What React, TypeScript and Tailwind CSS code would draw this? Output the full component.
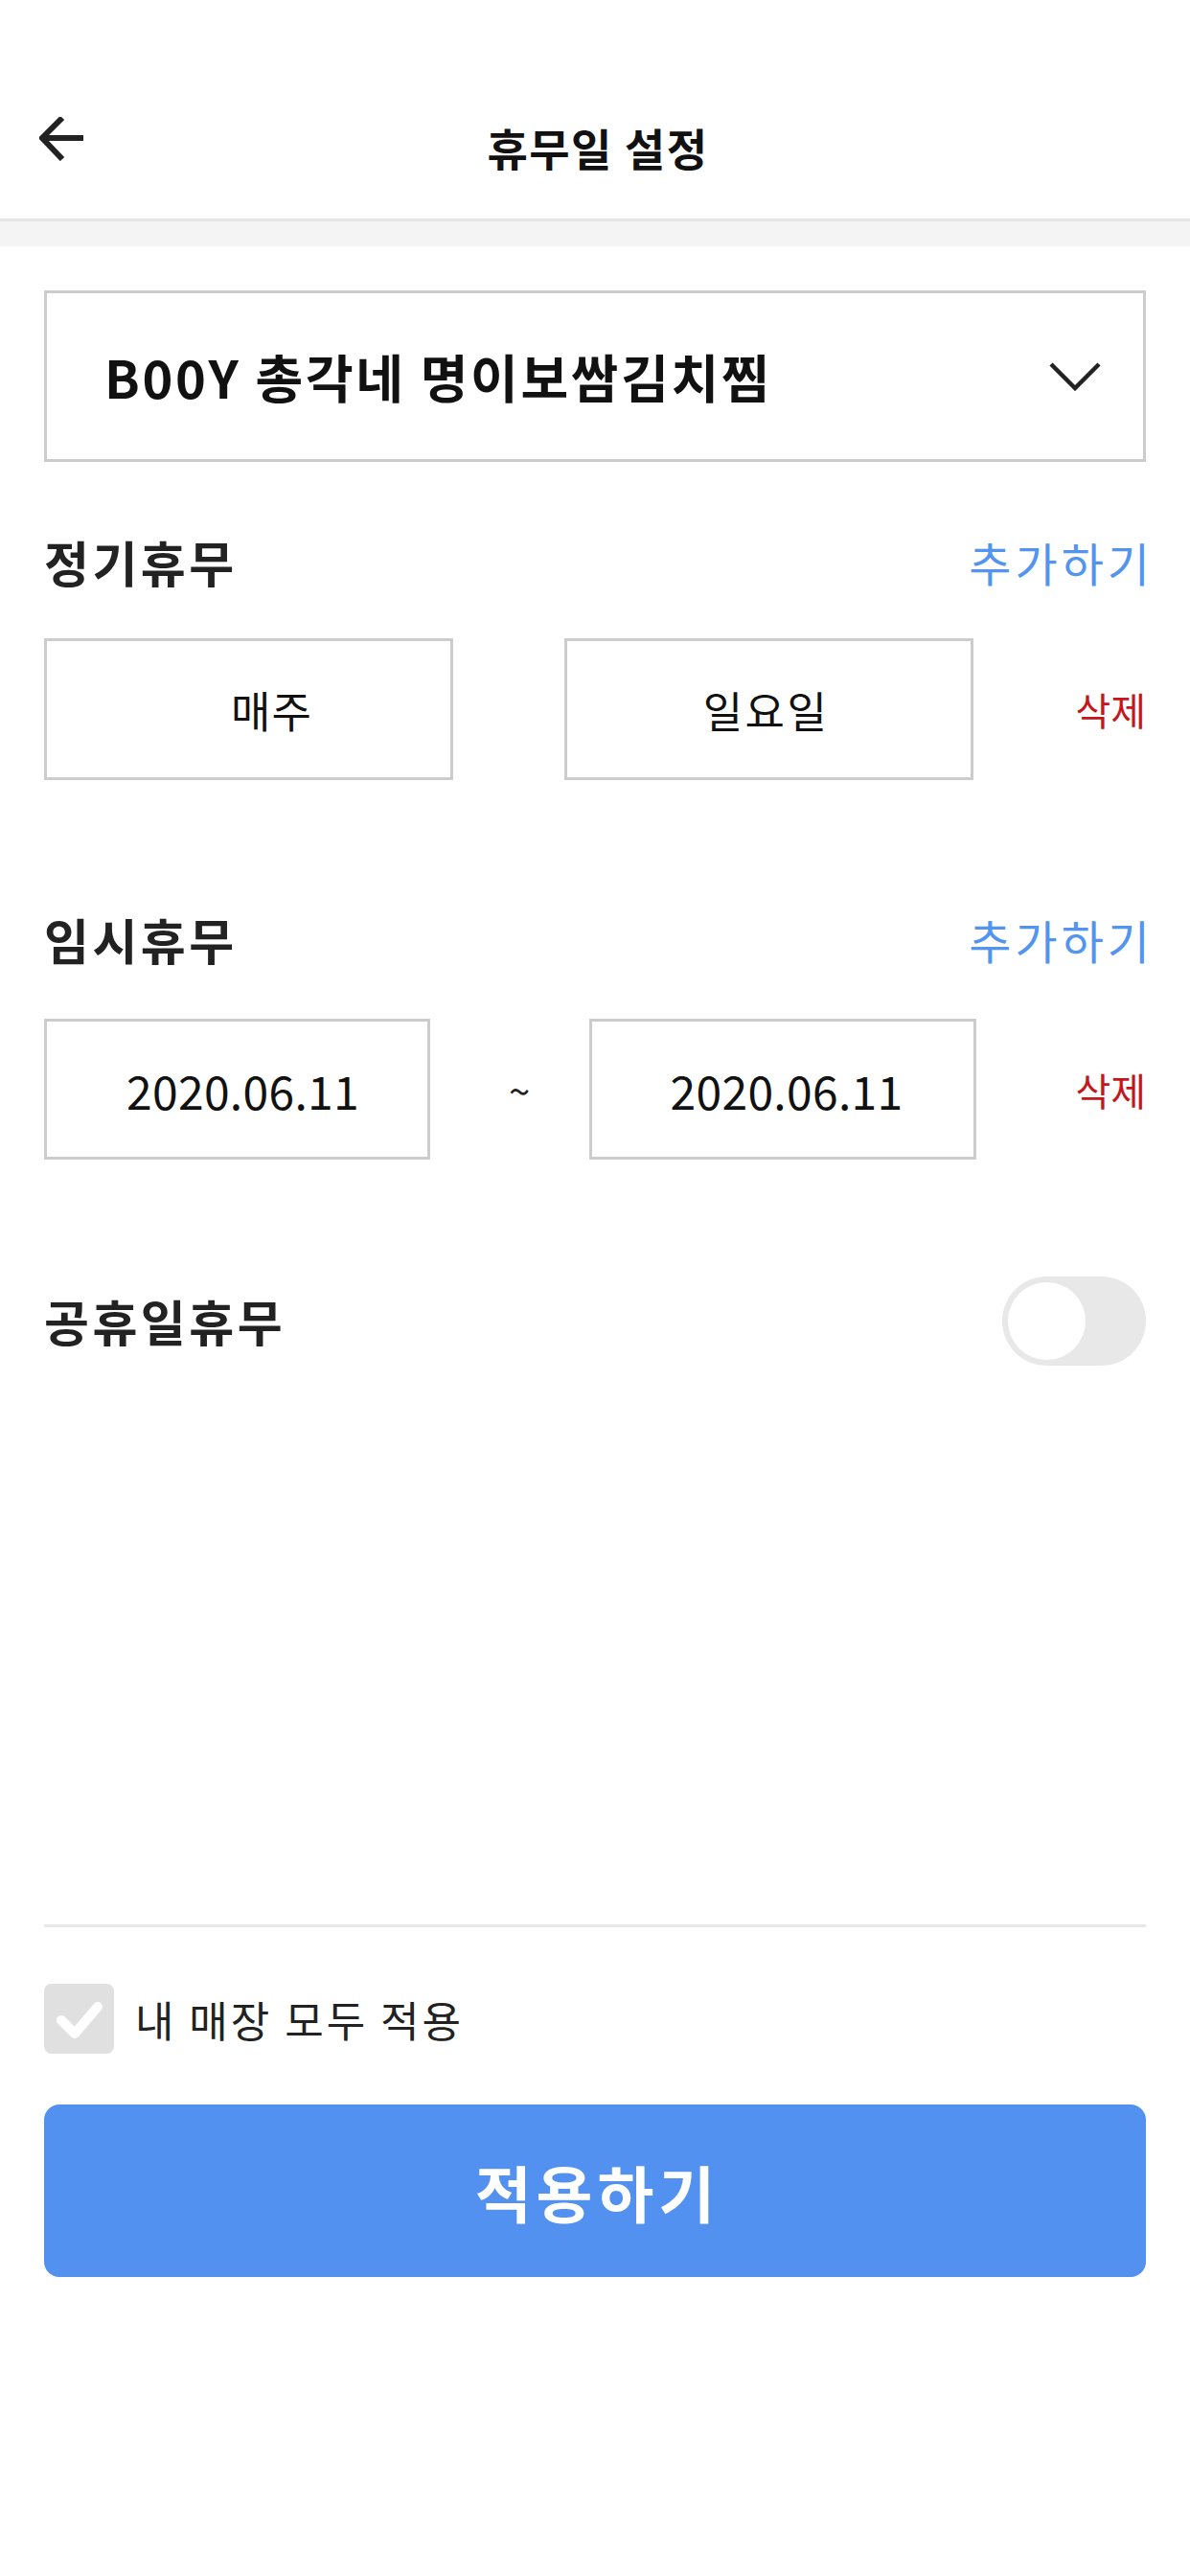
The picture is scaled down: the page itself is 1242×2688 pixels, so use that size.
import React from "react";

const font = { fontFamily: '"Noto Sans CJK KR", "Noto Sans", sans-serif' };

function BackArrow() {
  return (
    <svg width="48" height="46" viewBox="0 0 48 46" fill="none">
      <path d="M46 22 H3" stroke="#222222" strokeWidth="6" />
      <path d="M24 1 L3 22 L24 44" stroke="#222222" strokeWidth="6" />
    </svg>
  );
}

function Chevron() {
  return (
    <svg width="54" height="30" viewBox="0 0 54 30" fill="none">
      <path d="M2 2 L27 27 L52 2" stroke="#222222" strokeWidth="4.5" />
    </svg>
  );
}

function SectionHead({ title, action }: { title: string; action?: string }) {
  return (
    <div className="flex h-[80px] items-center justify-between">
      <span className="text-[51px] font-bold leading-none tracking-[3.5px] text-[#222222]">{title}</span>
      {action && (
        <span className="mr-[-8px] text-[48px] leading-none tracking-[4px] text-[#5294f0]">{action}</span>
      )}
    </div>
  );
}

export default function App() {
  return (
    <div className="min-h-[2688px] w-[1242px] bg-white" style={font}>
      {/* Header */}
      <header className="border-b-[3px] border-[#e5e5e5] pt-[110px] pb-[48px]">
        <div className="grid h-[70px] grid-cols-[1fr_auto_1fr] items-center px-[41px]">
          <div className="flex items-center">
            <BackArrow />
          </div>
          <h1 className="pt-[16px] pl-[6px] text-[46px] font-bold leading-none tracking-[1.5px] text-[#111111]">휴무일 설정</h1>
          <div />
        </div>
      </header>
      <div className="h-[26px] bg-[#f4f4f4]" />

      <main className="px-[46px]">
        {/* Store selector */}
        <div className="mt-[46px] flex h-[179px] items-center justify-between border-[3px] border-[#cccccc] pl-[60px] pr-[44px]">
          <span className="text-[54px] font-bold leading-none tracking-[2.7px] text-[#111111]">
            B00Y 총각네 명이보쌈김치찜
          </span>
          <Chevron />
        </div>

        {/* 정기휴무 */}
        <div className="mt-[64px]">
          <SectionHead title="정기휴무" action="추가하기" />
        </div>
        <div className="mt-[40px] flex items-center">
          <div className="flex h-[148px] w-[427px] items-center justify-center border-[3px] border-[#cccccc] pl-[48px]">
            <span className="text-[45px] leading-none tracking-[1px] text-[#111111]">매주</span>
          </div>
          <div className="ml-[116px] flex h-[148px] w-[427px] items-center justify-center border-[3px] border-[#cccccc] pr-[6px]">
            <span className="text-[45px] leading-none tracking-[2.5px] text-[#111111]">일요일</span>
          </div>
          <div className="flex flex-1 justify-end">
            <span className="text-[40px] leading-none text-[#c4161c]">삭제</span>
          </div>
        </div>

        {/* 임시휴무 */}
        <div className="mt-[126px]">
          <SectionHead title="임시휴무" action="추가하기" />
        </div>
        <div className="mt-[43px] flex items-center">
          <div className="flex h-[147px] w-[403px] items-center justify-center border-[3px] border-[#cccccc] pl-[12px]">
            <span className="text-[48px] leading-none tracking-[0.3px] text-[#111111]">2020.06.11</span>
          </div>
          <div className="flex w-[166px] justify-center pl-[20px]">
            <span className="text-[40px] leading-none text-[#222222]">~</span>
          </div>
          <div className="flex h-[147px] w-[404px] items-center justify-center border-[3px] border-[#cccccc] pl-[8px]">
            <span className="text-[48px] leading-none tracking-[0.3px] text-[#111111]">2020.06.11</span>
          </div>
          <div className="flex flex-1 justify-end">
            <span className="text-[40px] leading-none text-[#c4161c]">삭제</span>
          </div>
        </div>

        {/* 공휴일휴무 */}
        <div className="mt-[122px] flex h-[93px] items-center justify-between">
          <span className="text-[51px] font-bold leading-none tracking-[3.5px] text-[#222222]">공휴일휴무</span>
          <div className="flex h-[93px] w-[150px] items-center rounded-full bg-[#e8e8e8] px-[6px]">
            <div className="h-[81px] w-[81px] rounded-full bg-white" />
          </div>
        </div>

        {/* Footer */}
        <div className="mt-[583px] h-[3px] bg-[#e8e8e8]" />
        <label className="mt-[59px] flex items-center gap-[22px]">
          <span className="flex h-[73px] w-[73px] items-center justify-center rounded-[8px] bg-[#e0e0e0]">
            <svg width="50" height="40" viewBox="0 0 50 40" fill="none">
              <path d="M6 21 L20 35 L44 7" stroke="#ffffff" strokeWidth="10" strokeLinecap="round" strokeLinejoin="round" />
            </svg>
          </span>
          <span className="text-[44px] leading-none tracking-[3px] text-[#222222]">내 매장 모두 적용</span>
        </label>
        <button
          type="button"
          className="mt-[53px] flex h-[180px] w-full items-center justify-center rounded-[16px] bg-[#5291ef]"
        >
          <span className="pl-[5px] text-[64px] font-bold leading-none tracking-[5px] text-white">적용하기</span>
        </button>
      </main>
    </div>
  );
}
